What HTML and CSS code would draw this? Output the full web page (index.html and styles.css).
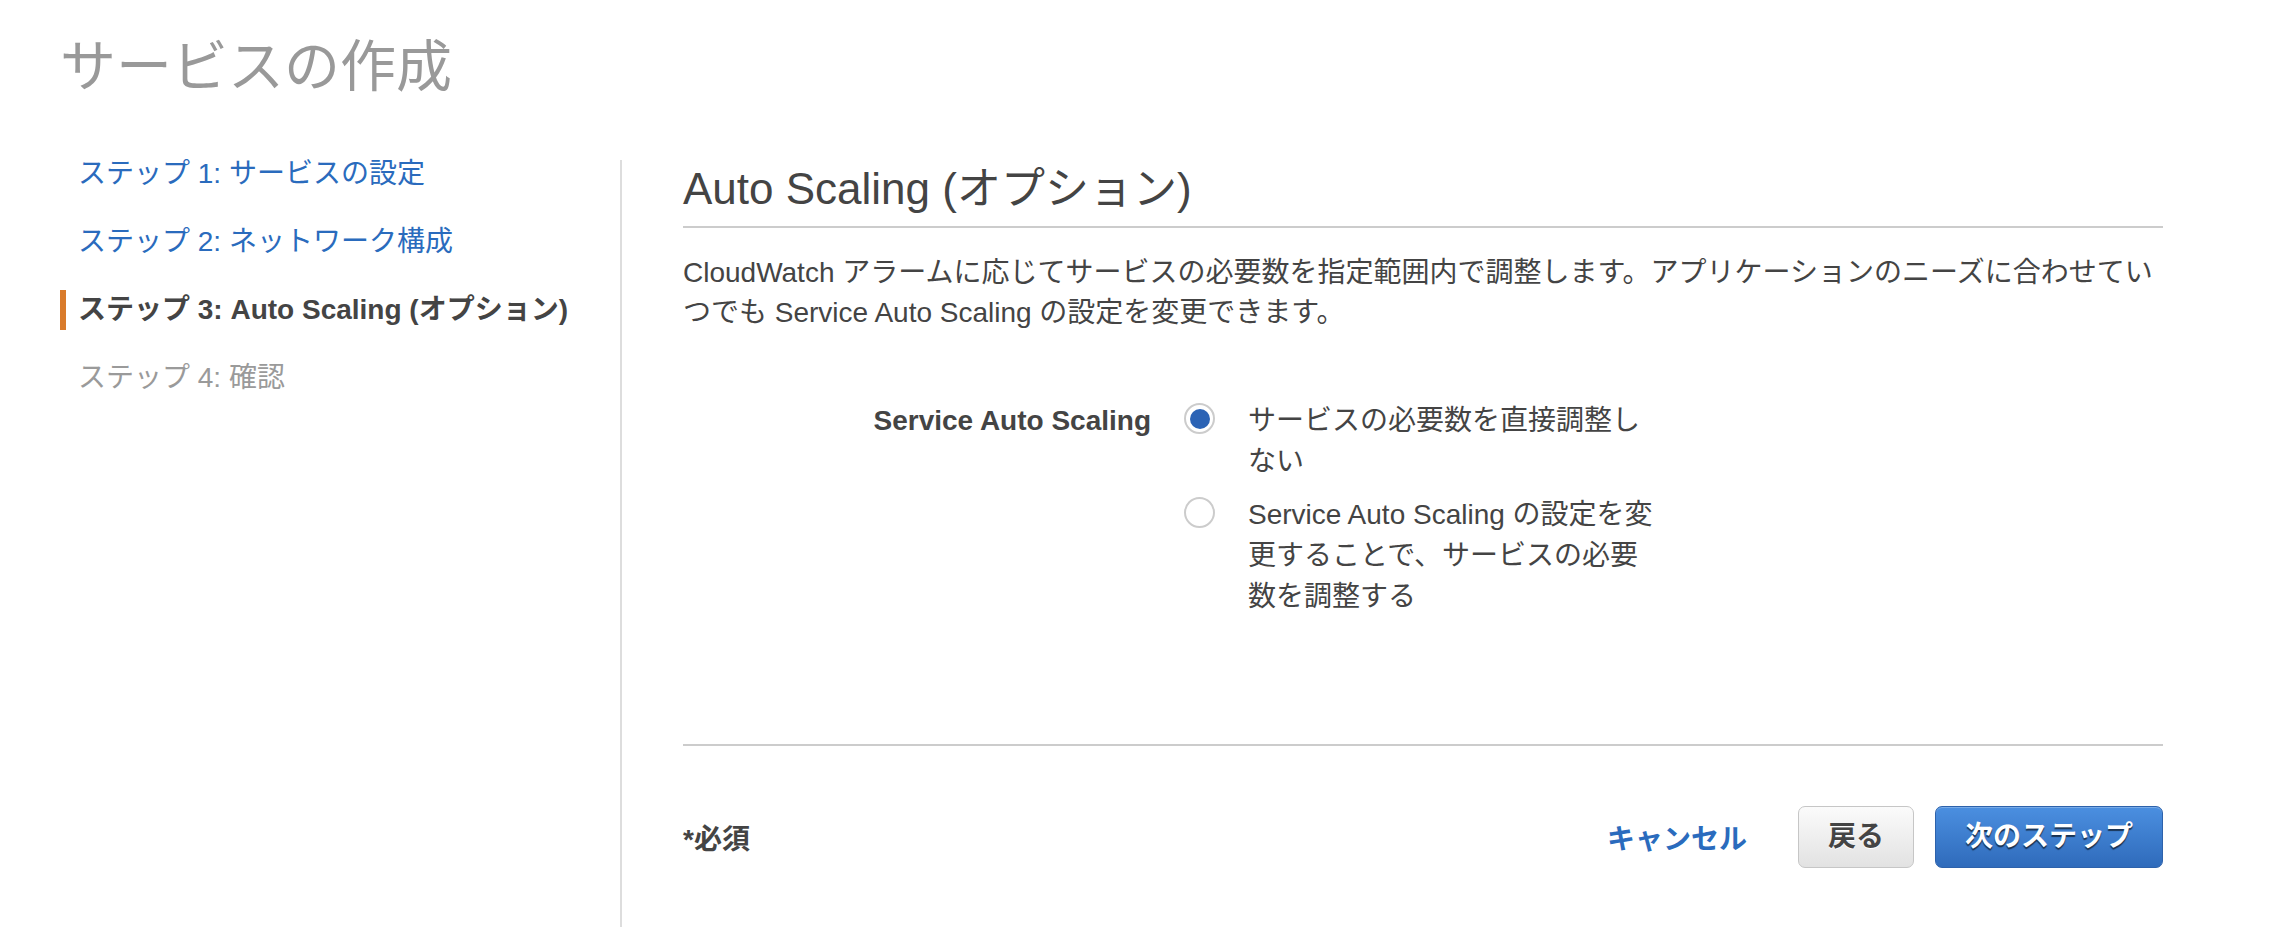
FILE: index.html
```html
<!DOCTYPE html>
<html lang="ja">
<head>
<meta charset="utf-8">
<title>サービスの作成</title>
<link rel="stylesheet" href="styles.css">
</head>
<body>
<div class="page">
  <h1 class="title">サービスの作成</h1>
  <div class="wizard">
    <ul class="steps">
      <li class="step link">ステップ 1: サービスの設定</li>
      <li class="step link">ステップ 2: ネットワーク構成</li>
      <li class="step current">ステップ 3: Auto Scaling (オプション)</li>
      <li class="step todo">ステップ 4: 確認</li>
    </ul>
    <div class="content">
      <h2 class="heading">Auto Scaling (オプション)</h2>
      <p class="desc">CloudWatch アラームに応じてサービスの必要数を指定範囲内で調整します。アプリケーションのニーズに合わせていつでも Service Auto Scaling の設定を変更できます。</p>
      <div class="form-row">
        <div class="label">Service Auto Scaling</div>
        <div class="options">
          <label class="option">
            <span class="radio checked"><span class="dot"></span></span>
            <span class="option-text">サービスの必要数を直接調整しない</span>
          </label>
          <label class="option">
            <span class="radio"></span>
            <span class="option-text">Service Auto Scaling の設定を変更することで、サービスの必要数を調整する</span>
          </label>
        </div>
      </div>
      <div class="footer">
        <div class="required">*必須</div>
        <div class="actions">
          <a class="cancel">キャンセル</a>
          <button class="btn btn-back">戻る</button>
          <button class="btn btn-next">次のステップ</button>
        </div>
      </div>
    </div>
  </div>
</div>
</body>
</html>
```
FILE: styles.css
```css
html, body {
  margin: 0;
  padding: 0;
  background: #ffffff;
}
body {
  font-family: "Liberation Sans", "Noto Sans CJK JP", sans-serif;
  color: #444444;
}
.page {
  padding: 27px 0 0 60px;
}
.title {
  margin: 0;
  font-size: 56px;
  line-height: 80px;
  font-weight: 400;
  color: #999999;
}
.wizard {
  display: flex;
  align-items: flex-start;
  margin-top: 53px;
}
.steps {
  list-style: none;
  margin: -6px 0 0 0;
  padding: 0;
  width: 560px;
  flex: none;
}
.step {
  font-size: 28px;
  line-height: 28px;
  padding: 6px 0 6px 18px;
  margin-bottom: 28px;
  white-space: nowrap;
}
.step.link {
  color: #2a6bbd;
}
.step.current {
  font-weight: 700;
  color: #444444;
  border-left: 6px solid #d97b2b;
  padding-left: 12px;
}
.step.todo {
  color: #9a9a9a;
}
.content {
  border-left: 2px solid #dddddd;
  padding: 0 0 59px 61px;
  width: 1480px;
  flex: none;
}
.heading {
  margin: 3px 0 0 0;
  font-size: 44px;
  line-height: 52px;
  font-weight: 400;
  color: #444444;
  padding-bottom: 11px;
  border-bottom: 2px solid #cccccc;
}
.desc {
  margin: 25px 0 0 0;
  font-size: 28px;
  line-height: 40px;
}
.form-row {
  display: flex;
  align-items: flex-start;
  margin-top: 67px;
}
.label {
  width: 468px;
  flex: none;
  text-align: right;
  font-size: 28px;
  line-height: 41px;
  font-weight: 700;
  color: #444444;
}
.options {
  margin-left: 33px;
  display: flex;
  flex-direction: column;
  gap: 12px;
}
.option {
  display: flex;
  align-items: flex-start;
}
.radio {
  width: 27px;
  height: 27px;
  border: 2px solid #cccccc;
  border-radius: 50%;
  margin-top: 3px;
  flex: none;
  display: flex;
  align-items: center;
  justify-content: center;
  background: #ffffff;
}
.radio .dot {
  width: 20px;
  height: 20px;
  border-radius: 50%;
  background: #2b63b5;
}
.option-text {
  margin-left: 33px;
  width: 416px;
  font-size: 28px;
  line-height: 41px;
  color: #444444;
}
.footer {
  margin-top: 127px;
  border-top: 2px solid #cccccc;
  padding-top: 60px;
  display: flex;
  align-items: center;
  justify-content: space-between;
}
.required {
  font-size: 28px;
  font-weight: 700;
  color: #444444;
}
.actions {
  display: flex;
  align-items: center;
}
.cancel {
  font-size: 28px;
  font-weight: 700;
  color: #2a6bbd;
  margin-right: 51px;
}
.btn {
  font-family: inherit;
  font-size: 28px;
  font-weight: 700;
  line-height: 60px;
  padding: 0 29px;
  border-radius: 7px;
  border: 1px solid #c6c6c6;
  cursor: pointer;
}
.btn-back {
  background: linear-gradient(#fbfbfb, #e2e2e2);
  color: #444444;
  text-shadow: 0 1px 0 #ffffff;
}
.btn-next {
  margin-left: 21px;
  background: linear-gradient(#4b8fe0, #2f6bbb);
  border-color: #2d62ab;
  color: #ffffff;
  text-shadow: 0 2px 1px rgba(0, 0, 0, 0.6);
  box-shadow: inset 0 1px 0 rgba(255, 255, 255, 0.25);
}
```
